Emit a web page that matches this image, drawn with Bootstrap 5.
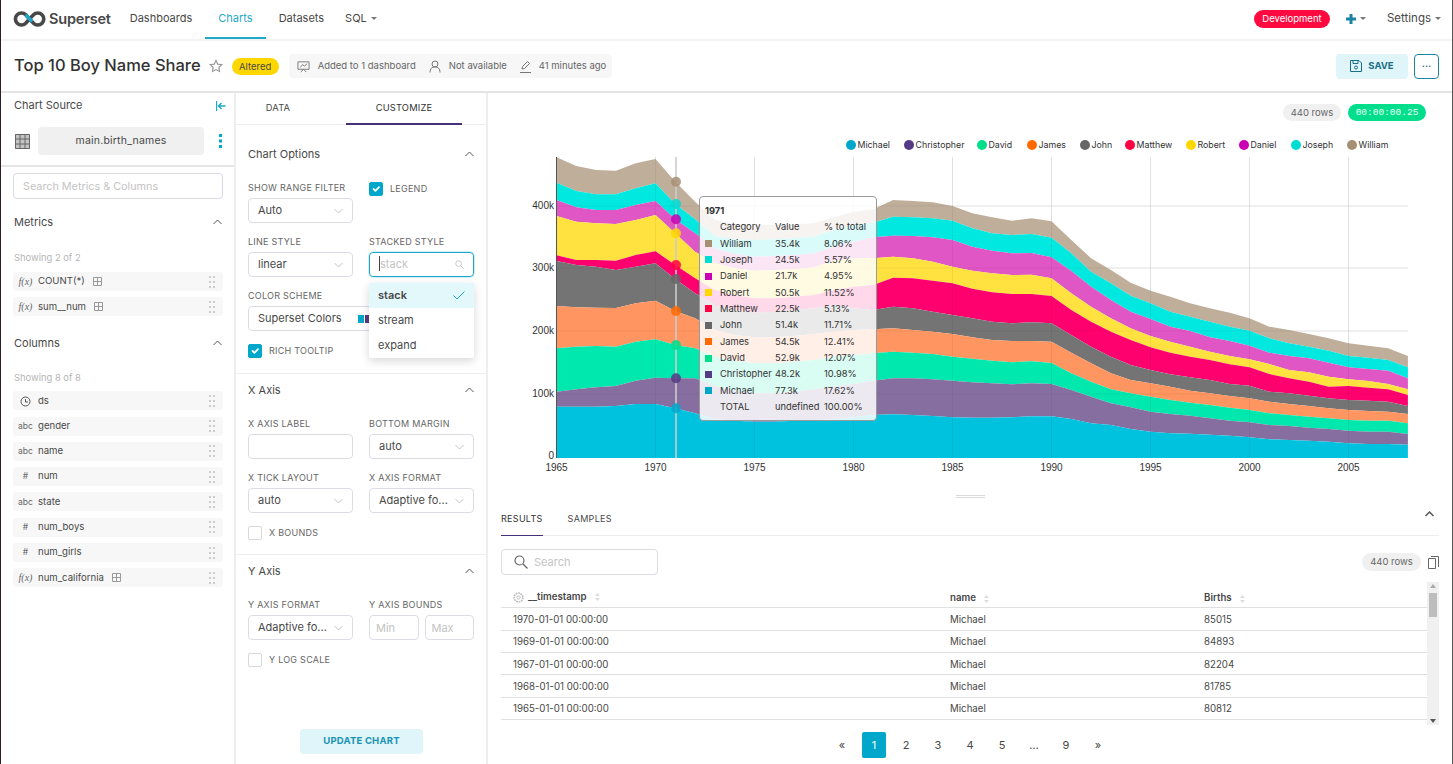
<!DOCTYPE html>
<html lang="en">
<head>
<meta charset="utf-8">
<title>Top 10 Boy Name Share</title>
<link href="https://cdn.jsdelivr.net/npm/bootstrap@5.3.0/dist/css/bootstrap.min.css" rel="stylesheet">
<style>
html,body{height:100%;overflow:hidden}
body{font-family:Inter,"Liberation Sans",sans-serif;color:#323232;background:#fff;font-size:12px}
.app{height:764px;border-left:1px solid #2d1c2a;border-right:1px solid #555;overflow:hidden}
.topnav{height:41px;border-bottom:2px solid #f3f3f3;padding:0 11px 2px 12px;flex:none}
.brand-name{font-size:14.500px;font-weight:600;color:#484848;letter-spacing:-.2px;margin-left:3px}
.topnav .nav-link{color:#484848;font-size:11px;padding:0 13px;height:39px;line-height:37px;border-bottom:2px solid transparent}
.topnav .nav-link.active{color:#1fa8c9;border-bottom-color:#1fa8c9}
.topnav .nav-link.sql-link{margin-left:-5px}
.main-nav{margin-left:6px}
.tri{display:inline-block;width:0;height:0;border:3px solid transparent;border-top:3.500px solid #777;border-bottom:0;vertical-align:2px;margin-left:4px}
.env-pill{background:#ff0a40;color:#fff;font-size:9.500px;border-radius:10px;height:18px;line-height:18px;width:76px;text-align:center}
.settings{font-size:11.500px;color:#484848;margin-left:21px}
.titlebar{height:52px;border-bottom:2px solid #e4e4e4;padding:0 13px;flex:none}
.chart-title{font-size:16.500px;font-weight:500;color:#323232;margin:0}
.altered{background:#ffd700;color:#484848;font-size:9.500px;height:17px;line-height:17px;width:47px;text-align:center;border-radius:9px;font-weight:400;margin-left:9px}
.metabar{background:#f7f7f7;height:24px;width:323px;border-radius:4px;margin-left:10px;padding:0 8px;font-size:9.500px;color:#666;gap:13px}
.metabar span{white-space:nowrap}
.save-btn{background:#dff5f9;color:#1a6f88;border:0;border-radius:4px;width:72px;height:25px;font-size:9.500px;font-weight:700;padding:0;display:flex;align-items:center;justify-content:center;gap:6px}
.more-btn{width:25px;height:25px;border:1px solid #1a85a3;border-radius:4px;margin-left:6px;background:#fff;padding:0;color:#1a6f88;font-size:11px;line-height:16px}
.side{width:235px;flex:none;border-right:2px solid #eee}
.ctrl{width:252px;flex:none;border-right:2px solid #eee;position:relative}
.main-col{min-width:0;flex:1}
.head-txt{font-size:11px;color:#484848;font-weight:400;padding-left:1px}
.src-row{height:74px;border-bottom:2px solid #e4e4e4;padding:0 11px 0 12px}
.src-top{height:25px}
.src-line{margin-top:9px}
.ds-pill{background:#f0f0f0;border-radius:4px;height:28px;width:166px;line-height:28px;text-align:center;font-size:10.500px;color:#484848;letter-spacing:.2px}
.search-box{height:26px;border:1px solid #d9d9e4;border-radius:4px;font-size:10.800px;padding:0 9px;color:#bdbdbd;box-shadow:none}
.search-box::placeholder{color:#c4c4c4}
.group-h{height:20px}
.show-txt{font-size:9.400px;color:#b5b5b5;padding-left:1px}
.field{background:#f7f7f7;height:19px;border-radius:3px;display:flex;align-items:center;font-size:9.600px;color:#484848;padding-right:8px;margin-bottom:6.300px}
.ftype{width:25px;text-align:center;font-size:8.500px;color:#666;flex:none;letter-spacing:0}
.fx{font-family:"Liberation Serif",serif;font-style:italic;font-size:10px}
.ctrl-tabs{height:32px;border-bottom:1px solid #eee}
.ctrl-tabs .nav-link{font-size:9.300px;color:#484848;padding:0;text-transform:uppercase;height:32px;line-height:30px;text-align:center;letter-spacing:.2px;border-bottom:2px solid transparent}
.ctrl-tabs .nav-link.active{border-bottom-color:#443178;color:#323232}
.tab-a{width:110px}.tab-a .nav-link{padding-right:26px}.tab-b{width:116px}
.sect{padding:0 12px 0 12px;border-bottom:1px solid #eee}
.sect-h{height:20px;font-size:11px;color:#484848}
.clabel{font-size:9px;line-height:10px;height:10px;color:#666;letter-spacing:.25px;text-transform:uppercase;margin-bottom:5px;white-space:nowrap}
.crow{display:flex;gap:16px;margin-bottom:14px}
.ccell{width:105px;flex:none;position:relative}
.form-select.sel,.form-control.inp{height:25px;font-size:11px;padding:0 20px 0 9px;border:1px solid #dcdce6;border-radius:4px;color:#484848;line-height:23px;box-shadow:none;background-position:right 9px center;background-size:9px 6px;background-image:url("data:image/svg+xml,%3csvg xmlns='http://www.w3.org/2000/svg' viewBox='0 0 9 6'%3e%3cpath fill='none' stroke='%23c4c4c4' d='M.5 1l4 4 4-4'/%3e%3c/svg%3e");white-space:nowrap;overflow:hidden}
.form-control.plain{background-image:none;padding:0 6px}
.form-control.plain::placeholder{color:#c4c4c4}
.focused{border:1px solid #1fa8c9;border-radius:4px;height:25px;box-shadow:0 0 0 1px #d2eef5;padding:0 9px;color:#c4c4c4;font-size:11px;line-height:23px}
.caret-bar{display:inline-block;width:1px;height:15px;background:#444;vertical-align:-3px}
.opt-menu{position:absolute;top:46px;left:0;width:105px;min-width:0;padding:0;margin:0;border:0;border-radius:2px;box-shadow:0 3px 10px rgba(0,0,0,.16);z-index:5;background:#fff;display:block}
.opt-menu .dropdown-item{height:25px;line-height:25px;padding:0 9px;font-size:11px;color:#484848}
.opt-menu .dropdown-item.picked{background:#e3f8fb;font-weight:600}
.chk{gap:7px;height:14px;font-size:9px;color:#666;letter-spacing:.25px;text-transform:uppercase}
.chk .form-check-input{width:14px;height:14px;margin:0;border-radius:2px;border-color:#d9d9d9;flex:none;box-shadow:none}
.chk .form-check-input:checked{background-color:#00a7ca;border-color:#00a7ca}
.update-btn{background:#dff5f9;color:#1a93b3;border:0;border-radius:4px;width:123px;height:25px;font-size:9.500px;font-weight:700;padding:0;letter-spacing:.2px;position:absolute;left:64px;bottom:10px}
.pills{padding:11px 26px 0 0;height:37px;gap:7px;flex:none}
.rowpill{background:#f0f0f0;border-radius:9px;height:17px;line-height:17px;font-size:9.500px;color:#666;width:58px;text-align:center;font-weight:400}
.timer{background:#00de8c;border-radius:9px;height:17px;line-height:17px;font-size:9.500px;color:#eafff5;width:78px;text-align:center;font-family:"Liberation Mono",monospace;font-weight:400}
.chart-box{position:relative;height:360px;flex:none}
.chart-box svg{display:block}
.tipbox{position:absolute;left:211px;top:66px;width:178px;height:225px;background:rgba(255,255,255,.85);border:1px solid #9a9a9a;border-radius:4px;padding:7px 5px;font-size:9.300px;color:#323232}
.tip-year{font-weight:700;line-height:13px;height:15px}
.tip-tbl{width:167px;table-layout:fixed;border-collapse:collapse}
.tip-tbl td{height:16.360px;padding:0;white-space:nowrap;line-height:16px}
.swatch{display:inline-block;width:7px;height:7px;vertical-align:-0.500px}
.handle{height:15px;flex:none}
.handle i{display:block;width:29px;height:3px;border-top:1px solid #d9d9d9;border-bottom:1px solid #d9d9d9;margin-top:-2px}
.res-wrap{padding:0 13px 0 13px;flex:1;min-height:0}
.res-tabs{height:31px;border-bottom:1px solid #eee;position:relative;flex:none}
.res-tabs .nav-link{font-size:9px;color:#484848;padding:0;height:31px;line-height:28px;letter-spacing:.3px;border-bottom:1px solid transparent;margin-right:25px}
.res-tabs .nav-link.active{border-bottom-color:#443178;color:#323232}
.res-bar{height:26px;margin-top:13px;flex:none}
.res-search{width:157px;height:26px;border:1px solid #dcdce6;border-radius:4px;font-size:11px;color:#c4c4c4;padding-left:12px;gap:6px}
.tbl-wrap{height:143px;margin-top:7px;overflow:hidden;flex:none}
.res-table{table-layout:fixed;font-size:9.700px;color:#484848;margin:0;width:926px}
.res-table th{font-weight:600;height:25px;padding:8px 0 0 12px;vertical-align:middle;border-bottom:1px solid #e0e0e0;color:#484848;box-shadow:none}
.res-table td{height:22.400px;padding:2px 0 0 12px;vertical-align:middle;border-bottom:1px solid #e0e0e0;box-shadow:none}
.fakebar{width:12px;background:#f0f0f0;position:relative;flex:none}
.fakebar b{position:absolute;left:2px;top:11px;width:8px;height:24px;background:#bdbdbd}
.fakebar s{position:absolute;left:3px;width:0;height:0;border:3px solid transparent}
.pg-row{height:30px;flex:none;margin-top:7px}
.pager{margin:0;gap:0}
.pager .page-item .page-link{border:0;width:32px;height:26px;line-height:26px;padding:0;margin:0;text-align:center;font-size:11px;color:#484848;background:none;box-shadow:none}
.pager .page-item.active .page-link{background:#00a7ca;color:#fff;border-radius:2px;width:24px;margin:0 4px}
.bounds-gap{gap:6px}
.collapse-ic{margin-right:-3px}
.side-body{padding:6px 11px 0 12px}
</style>
</head>
<body>
<div class="app d-flex flex-column">
  <header class="topnav d-flex align-items-center">
    <svg width="33" height="16" viewBox="0 0 32 16" class="flex-none"><path fill="none" stroke="#484848" stroke-width="3.600" d="M16 8l-3.800 4.200a6 6 0 1 1 0-8.400L20 12.200a6 6 0 1 0 0-8.400L16 8"/><path fill="none" stroke="#20a7c9" stroke-width="3.600" d="M12.200 3.800L18.500 10.600"/></svg>
    <span class="brand-name">Superset</span>
    <ul class="nav main-nav align-self-start">
      <li class="nav-item"><a class="nav-link" href="#">Dashboards</a></li>
      <li class="nav-item"><a class="nav-link active" href="#">Charts</a></li>
      <li class="nav-item"><a class="nav-link" href="#">Datasets</a></li>
      <li class="nav-item"><a class="nav-link sql-link" href="#">SQL<span class="tri"></span></a></li>
    </ul>
    <div class="ms-auto d-flex align-items-center">
      <span class="env-pill">Development</span>
      <svg class="ms-3" width="10" height="10" viewBox="0 0 10 10"><path d="M3.500 0h3v3.500H10v3H6.500V10h-3V6.500H0v-3h3.500z" fill="#1a85a3"/></svg><span class="tri"></span>
      <span class="settings">Settings<span class="tri"></span></span>
    </div>
  </header>
  <div class="titlebar d-flex align-items-center">
    <h1 class="chart-title">Top 10 Boy Name Share</h1>
    <svg class="ms-2" width="14" height="14" viewBox="0 0 24 24"><path fill="none" stroke="#999" stroke-width="2" d="M12 2.500l3 6.300 6.900.9-5 4.800 1.200 6.900-6.100-3.300-6.100 3.300 1.200-6.900-5-4.800 6.900-.9z"/></svg>
    <span class="altered">Altered</span>
    <div class="metabar d-flex align-items-center">
      <span class="d-flex align-items-center gap-2"><svg width="13" height="13" viewBox="0 0 14 14"><path fill="none" stroke="#777" d="M1 2h12v8H1zM4 13l3-3 3 3M3.500 8l2.500-3 2 1.500L11 4"/></svg>Added to 1 dashboard</span>
      <span class="d-flex align-items-center gap-2"><svg width="12" height="13" viewBox="0 0 12 13"><circle cx="6" cy="4" r="3" fill="none" stroke="#777"/><path fill="none" stroke="#777" d="M1 12.500c0-4 2-5.500 5-5.500s5 1.500 5 5.500"/></svg>Not available</span>
      <span class="d-flex align-items-center gap-2"><svg width="11" height="13" viewBox="0 0 11 13"><path fill="none" stroke="#777" d="M2 9l.5-2.500L7.500 1.500l2 2-5 5zM0 12.500h11"/></svg>41 minutes ago</span>
    </div>
    <div class="ms-auto d-flex align-items-center">
      <button class="save-btn" type="button"><svg width="12" height="12" viewBox="0 0 12 12"><path fill="none" stroke="#1a6f88" d="M.5.500h8.500l2.500 2.500v8.500H.5zM3 .500v3h5v-3"/><circle cx="6" cy="7.500" r="1.500" fill="none" stroke="#1a6f88"/></svg>SAVE</button>
      <button class="more-btn" type="button">···</button>
    </div>
  </div>
  <div class="d-flex flex-grow-1" style="min-height:0">
    <aside class="side">
      <div class="src-row">
        <div class="src-top d-flex align-items-center justify-content-between"><span class="head-txt">Chart Source</span>
          <svg width="10" height="10" viewBox="0 0 10 10" class="collapse-ic"><path d="M.5 0v10M9.500 5H2.500M5.500 2l-3 3 3 3" fill="none" stroke="#1fa8c9" stroke-width="1.400"/></svg></div>
        <div class="d-flex align-items-center src-line">
          <svg width="15" height="15" viewBox="0 0 15 15" style="margin:0 8px 0 2px"><path fill="#c4c4c4" d="M0 0h15v15H0z"/><path stroke="#666" fill="none" d="M.5.500h14v14H.5zM5 0v15M10 0v15M0 5h15M0 10h15"/></svg>
          <div class="ds-pill">main.birth_names</div>
          <svg width="3" height="14" viewBox="0 0 3 14" style="margin-left:15px"><g fill="#00a7ca"><rect width="3" height="3"/><rect y="5.500" width="3" height="3"/><rect y="11" width="3" height="3"/></g></svg>
        </div>
      </div>
      <div class="side-body">
        <input class="form-control search-box" placeholder="Search Metrics &amp; Columns">
        <div class="group-h d-flex align-items-center justify-content-between" style="margin-top:13px"><span class="head-txt">Metrics</span><svg width="9" height="6" viewBox="0 0 9 6" style="margin-right:1px"><path fill="none" stroke="#555" d="M.5 5l4-4 4 4"/></svg></div>
        <div class="show-txt" style="margin-top:19px;margin-bottom:7px;line-height:14px">Showing 2 of 2</div>
        <div id="metrics"></div>
        <div class="group-h d-flex align-items-center justify-content-between" style="margin-top:17px"><span class="head-txt">Columns</span><svg width="9" height="6" viewBox="0 0 9 6" style="margin-right:1px"><path fill="none" stroke="#555" d="M.5 5l4-4 4 4"/></svg></div>
        <div class="show-txt" style="margin-top:18px;margin-bottom:6px;line-height:14px">Showing 8 of 8</div>
        <div id="columns"></div>
      </div>
    </aside>
    <section class="ctrl">
      <ul class="nav ctrl-tabs">
        <li class="nav-item tab-a"><a class="nav-link" href="#">Data</a></li>
        <li class="nav-item tab-b"><a class="nav-link active" href="#">Customize</a></li>
      </ul>
      <div class="sect" style="padding-top:19px;padding-bottom:15px">
        <div class="sect-h d-flex align-items-center justify-content-between"><span>Chart Options</span><svg width="9" height="6" viewBox="0 0 9 6"><path fill="none" stroke="#555" d="M.5 5l4-4 4 4"/></svg></div>
        <div class="crow" style="margin-top:19px">
          <div class="ccell"><div class="clabel">Show range filter</div><select class="form-select sel"><option>Auto</option></select></div>
          <div class="ccell"><label class="chk d-flex align-items-center" style="margin-top:-1px"><input class="form-check-input" type="checkbox" checked>Legend</label></div>
        </div>
        <div class="crow">
          <div class="ccell"><div class="clabel">Line style</div><select class="form-select sel"><option>linear</option></select></div>
          <div class="ccell"><div class="clabel">Stacked style</div>
            <div class="focused d-flex align-items-center justify-content-between"><span><span class="caret-bar"></span>stack</span><svg width="9" height="9" viewBox="0 0 10 10"><circle cx="4" cy="4" r="3.200" fill="none" stroke="#c4c4c4"/><path stroke="#c4c4c4" d="M6.500 6.500l3 3"/></svg></div>
            <div class="dropdown-menu opt-menu">
              <a class="dropdown-item picked d-flex align-items-center justify-content-between" href="#">stack<svg width="12" height="9" viewBox="0 0 12 9"><path fill="none" stroke="#1fa8c9" d="M.5 4.500l3.500 3.500 7.500-7.500"/></svg></a>
              <a class="dropdown-item" href="#">stream</a>
              <a class="dropdown-item" href="#">expand</a>
            </div>
          </div>
        </div>
        <div class="clabel">Color scheme</div>
        <div class="form-select sel d-flex align-items-center" style="width:226px;margin-bottom:13px"><span>Superset Colors</span><svg width="30" height="8" viewBox="0 0 30 8" style="margin-left:16px"><rect width="6" height="8" fill="#00a7ca"/><rect x="7" width="6" height="8" fill="#553a85"/></svg></div>
        <label class="chk d-flex align-items-center"><input class="form-check-input" type="checkbox" checked>Rich tooltip</label>
      </div>
      <div class="sect" style="padding-top:6px;padding-bottom:14px">
        <div class="sect-h d-flex align-items-center justify-content-between"><span>X Axis</span><svg width="9" height="6" viewBox="0 0 9 6"><path fill="none" stroke="#555" d="M.5 5l4-4 4 4"/></svg></div>
        <div class="crow" style="margin-top:19px">
          <div class="ccell"><div class="clabel">X axis label</div><input class="form-control inp plain" aria-label="X axis label"></div>
          <div class="ccell"><div class="clabel">Bottom margin</div><select class="form-select sel"><option>auto</option></select></div>
        </div>
        <div class="crow" style="margin-bottom:13px">
          <div class="ccell"><div class="clabel">X tick layout</div><select class="form-select sel"><option>auto</option></select></div>
          <div class="ccell"><div class="clabel">X axis format</div><select class="form-select sel"><option>Adaptive fo...</option></select></div>
        </div>
        <label class="chk d-flex align-items-center"><input class="form-check-input" type="checkbox">X bounds</label>
      </div>
      <div class="sect border-0" style="padding-top:6px">
        <div class="sect-h d-flex align-items-center justify-content-between"><span>Y Axis</span><svg width="9" height="6" viewBox="0 0 9 6"><path fill="none" stroke="#555" d="M.5 5l4-4 4 4"/></svg></div>
        <div class="crow" style="margin-top:19px;margin-bottom:13px">
          <div class="ccell"><div class="clabel">Y axis format</div><select class="form-select sel"><option>Adaptive fo...</option></select></div>
          <div class="ccell"><div class="clabel">Y axis bounds</div><div class="d-flex bounds-gap"><input class="form-control inp plain" placeholder="Min"><input class="form-control inp plain" placeholder="Max"></div></div>
        </div>
        <label class="chk d-flex align-items-center"><input class="form-check-input" type="checkbox">Y log scale</label>
      </div>
      <button class="update-btn" type="button">UPDATE CHART</button>
    </section>
    <main class="main-col d-flex flex-column">
      <div class="pills d-flex justify-content-end align-items-start">
        <span class="rowpill">440 rows</span><span class="timer">00:00:00.25</span>
      </div>
      <div class="chart-box">
        <svg id="chart" width="964" height="360" viewBox="488 130 964 360" xmlns="http://www.w3.org/2000/svg"></svg>
        <div class="tipbox">
          <div class="tip-year">1971</div>
          <table class="tip-tbl"><colgroup><col style="width:15px"><col style="width:55px"><col style="width:49px"><col></colgroup><tbody id="tipbody"></tbody></table>
        </div>
      </div>
      <div class="handle d-flex align-items-center justify-content-center"><i></i></div>
      <div class="res-wrap d-flex flex-column">
        <div class="res-tabs d-flex">
          <ul class="nav">
            <li class="nav-item"><a class="nav-link active" href="#">RESULTS</a></li>
            <li class="nav-item"><a class="nav-link" href="#">SAMPLES</a></li>
          </ul>
          <svg class="ms-auto" width="9" height="6" viewBox="0 0 9 6" style="margin:6px 5px 0 0"><path fill="none" stroke="#555" stroke-width="1.500" d="M.5 5l4-4 4 4"/></svg>
        </div>
        <div class="res-bar d-flex align-items-center">
          <div class="res-search d-flex align-items-center"><svg width="14" height="14" viewBox="0 0 14 14"><circle cx="5.500" cy="5.500" r="4.500" fill="none" stroke="#666" stroke-width="1.200"/><path stroke="#666" stroke-width="1.200" d="M9 9l4.500 4.500"/></svg>Search</div>
          <span class="rowpill ms-auto" style="height:18px;line-height:18px;width:59px;margin-right:7px">440 rows</span>
          <svg width="11" height="13" viewBox="0 0 11 13"><path fill="none" stroke="#666" d="M.5 2.500h7v10h-7z"/><path fill="none" stroke="#666" d="M3 .5h7.500V11"/></svg>
        </div>
        <div class="tbl-wrap d-flex">
          <div class="flex-grow-1" style="min-width:0">
            <table class="table res-table">
              <colgroup><col style="width:437px"><col style="width:254px"><col></colgroup>
              <thead><tr>
                <th><span class="d-inline-flex align-items-center gap-1"><svg width="11" height="11" viewBox="0 0 12 12"><circle cx="6" cy="6" r="4.800" fill="none" stroke="#bbb" stroke-dasharray="2 .7" stroke-width="1.600"/><circle cx="6" cy="6" r="1.800" fill="none" stroke="#bbb"/></svg>__timestamp<svg class="ms-1" width="5" height="8" viewBox="0 0 5 8"><path fill="#ddd" d="M2.500 0L5 3H0zM2.500 8L0 5h5z"/></svg></span></th>
                <th><span class="d-inline-flex align-items-center gap-1">name<svg class="ms-1" width="5" height="8" viewBox="0 0 5 8"><path fill="#ddd" d="M2.500 0L5 3H0zM2.500 8L0 5h5z"/></svg></span></th>
                <th><span class="d-inline-flex align-items-center gap-1">Births<svg class="ms-1" width="5" height="8" viewBox="0 0 5 8"><path fill="#ddd" d="M2.500 0L5 3H0zM2.500 8L0 5h5z"/></svg></span></th>
              </tr></thead>
              <tbody>
                <tr><td>1970-01-01 00:00:00</td><td>Michael</td><td>85015</td></tr>
                <tr><td>1969-01-01 00:00:00</td><td>Michael</td><td>84893</td></tr>
                <tr><td>1967-01-01 00:00:00</td><td>Michael</td><td>82204</td></tr>
                <tr><td>1968-01-01 00:00:00</td><td>Michael</td><td>81785</td></tr>
                <tr><td>1965-01-01 00:00:00</td><td>Michael</td><td>80812</td></tr>
              </tbody>
            </table>
          </div>
          <div class="fakebar"><s style="top:2px;border-top:0;border-bottom:4px solid #aaa"></s><b></b><s style="bottom:2px;border-bottom:0;border-top:4px solid #555"></s></div>
        </div>
        <div class="pg-row d-flex justify-content-center">
          <ul class="pagination pager">
            <li class="page-item"><a class="page-link" href="#">«</a></li>
            <li class="page-item active"><a class="page-link" href="#">1</a></li>
            <li class="page-item"><a class="page-link" href="#">2</a></li>
            <li class="page-item"><a class="page-link" href="#">3</a></li>
            <li class="page-item"><a class="page-link" href="#">4</a></li>
            <li class="page-item"><a class="page-link" href="#">5</a></li>
            <li class="page-item"><a class="page-link" href="#">…</a></li>
            <li class="page-item"><a class="page-link" href="#">9</a></li>
            <li class="page-item"><a class="page-link" href="#">»</a></li>
          </ul>
        </div>
      </div>
    </main>
  </div>
</div>
<script>
(function(){
var grip='<svg class="ms-auto" width="6" height="12" viewBox="0 0 6 12"><g fill="#ccc"><rect width="2" height="2"/><rect x="4" width="2" height="2"/><rect y="5" width="2" height="2"/><rect x="4" y="5" width="2" height="2"/><rect y="10" width="2" height="2"/><rect x="4" y="10" width="2" height="2"/></g></svg>';
var calc='<svg class="ms-2" width="9" height="9" viewBox="0 0 9 9"><path fill="none" stroke="#999" d="M.5.500h8v8h-8zM.5 4.500h8M4.500.500v8"/></svg>';
var clock='<svg width="11" height="11" viewBox="0 0 11 11"><circle cx="5.500" cy="5.500" r="4.500" fill="none" stroke="#555"/><path fill="none" stroke="#555" d="M5.500 3v3H8"/></svg>';
function item(t,n,c){return '<div class="field"><span class="ftype'+(t==='f(x)'?' fx':'')+'">'+t+'</span><span>'+n+'</span>'+(c?calc:'')+grip+'</div>';}
document.getElementById('metrics').innerHTML=item('f(x)','COUNT(*)',1)+item('f(x)','sum__num',1);
document.getElementById('columns').innerHTML=item(clock,'ds')+item('abc','gender')+item('abc','name')+item('#','num')+item('abc','state')+item('#','num_boys')+item('#','num_girls')+item('f(x)','num_california',1);

var names=['William','Joseph','Daniel','Robert','Matthew','John','James','David','Christopher','Michael'];
var solid=['#a78f74','#00dcd2','#c900b3','#ffd700','#ff0042','#666666','#ff6a00','#00de8c','#553a85','#00a7ca'];
var area=['#bfae9a','#00e8e0','#e056c4','#ffe240','#ff006f','#747474','#ff9560','#00e8ae','#866fa0','#00c1de'];
var d=[
[82,158,210,258,376,393,528,655,785,830],[108,183,232,275,390,405,532,650,778,830],[120,193,240,280,390,410,533,648,772,830],[122,193,240,282,392,420,534,650,768,828],[100,175,225,270,375,410,520,635,752,822],[87,160,213,255,364,400,512,628,743,822],
[155,222,268,310,405,447,543,645,745,835],[215,268,310,365,445,490,565,655,745,850],[270,318,355,400,480,525,600,680,768,868],[283,328,372,415,495,540,615,692,782,872],[285,330,380,422,505,548,622,700,790,875],[285,328,378,420,505,545,622,700,790,875],[283,325,375,418,500,540,618,695,785,872],[280,320,370,412,495,535,612,690,778,870],[262,300,350,392,480,525,605,680,770,868],[245,285,335,385,470,535,600,675,762,862],[238,278,322,385,465,540,598,670,752,855],
[210,260,317,380,443,530,595,665,745,853],[213,262,318,385,445,535,600,668,745,855],[217,265,322,395,452,545,605,672,748,858],[228,272,330,410,460,555,612,680,752,862],[250,295,350,422,476,565,622,686,757,863],[262,310,362,430,487,575,630,692,760,863],[272,315,370,435,492,580,633,697,763,862],[265,312,369,434,492,577,633,694,760,859],[274,323,382,445,498,580,635,699,762,859],
[330,370,423,490,540,615,668,730,780,867],[385,425,470,530,575,650,700,755,800,880],[420,460,510,565,605,680,730,778,820,885],[458,497,545,595,630,705,750,790,832,897],[482,520,567,618,652,720,760,800,845,905],[500,545,590,635,668,733,770,810,852,910],[520,560,603,650,680,742,782,818,857,911],[535,575,622,665,690,750,790,825,865,914],[548,590,633,678,703,762,798,833,872,917],[565,602,647,688,712,767,805,840,877,922],[590,625,668,702,732,785,815,850,885,928],[600,640,678,720,745,790,822,855,888,930],[612,650,685,727,755,797,828,860,893,932],[625,662,698,740,770,805,835,865,897,935],[640,678,712,748,768,810,840,870,902,940],[647,683,717,753,773,812,843,872,905,942],[655,690,722,762,778,815,845,872,905,942],[678,712,745,778,795,828,852,880,912,944]];
function X(i){return (556.5+19.8*i).toFixed(1);}
function Y(v){return (130+v/3).toFixed(1);}
var s='';
var yt=[[0,458],[100,394],[200,331],[300,268],[400,206]];
var gx=[];for(var yr=1970;yr<=2005;yr+=5)gx.push(556.5+19.8*(yr-1965));
gx.forEach(function(x){s+='<line x1="'+x+'" x2="'+x+'" y1="157" y2="458" stroke="#ececec"/>';});
yt.slice(1).forEach(function(t){s+='<line x1="556" x2="1408" y1="'+t[1]+'" y2="'+t[1]+'" stroke="#ececec"/>';});
for(var k=0;k<10;k++){
  var p='M';
  for(var i=0;i<d.length;i++)p+=(i?'L':'')+X(i)+' '+Y(d[i][k]);
  for(var j=d.length-1;j>=0;j--)p+='L'+X(j)+' '+(k<9?Y(d[j][k+1]):'458');
  s+='<path d="'+p+'Z" fill="'+area[k]+'"/>';
}
gx.forEach(function(x){s+='<line x1="'+x+'" x2="'+x+'" y1="157" y2="458" stroke="#000" stroke-opacity=".05"/>';});
yt.slice(1).forEach(function(t){s+='<line x1="556" x2="1408" y1="'+t[1]+'" y2="'+t[1]+'" stroke="#000" stroke-opacity=".05"/>';});
s+='<line x1="556.500" x2="556.500" y1="157" y2="458" stroke="#555"/>';
var tf='font-family="Liberation Sans,sans-serif" fill="#323232"';
yt.forEach(function(t){s+='<text x="554" y="'+(t[0]?t[1]+3:459)+'" text-anchor="end" font-size="10" '+tf+'>'+(t[0]?t[0]+'k':'0')+'</text>';});
for(var y2=1965;y2<=2005;y2+=5)s+='<text x="'+X(y2-1965)+'" y="471" text-anchor="middle" font-size="10" '+tf+'>'+y2+'</text>';
s+='<line x1="676" x2="676" y1="157" y2="458" stroke="#ccc" stroke-opacity=".8" stroke-width="2"/>';
[155,222,268,310,405,447,543,645,745,835].forEach(function(v,n){s+='<circle cx="676" cy="'+Y(v)+'" r="5" fill="'+solid[n]+'" fill-opacity=".85"/>';});
var lg=[[9,851],[8,909],[7,982],[6,1032],[5,1085],[4,1130],[3,1191],[2,1244],[1,1296],[0,1352]];
lg.forEach(function(l){s+='<circle cx="'+l[1]+'" cy="145" r="5" fill="'+solid[l[0]]+'"/><text x="'+(l[1]+6.500)+'" y="148" font-size="8.800" font-family="Inter,sans-serif" fill="#323232">'+names[l[0]]+'</text>';});
document.getElementById('chart').innerHTML=s;

var vals=[['35.4k','8.06%'],['24.5k','5.57%'],['21.7k','4.95%'],['50.5k','11.52%'],['22.5k','5.13%'],['51.4k','11.71%'],['54.5k','12.41%'],['52.9k','12.07%'],['48.2k','10.98%'],['77.3k','17.62%']];
var r='<tr><td></td><td>Category</td><td>Value</td><td>% to total</td></tr>';
names.forEach(function(n,i){r+='<tr><td><span class="swatch" style="background:'+solid[i]+'"></span></td><td>'+n+'</td><td>'+vals[i][0]+'</td><td>'+vals[i][1]+'</td></tr>';});
r+='<tr><td></td><td>TOTAL</td><td>undefined</td><td>100.00%</td></tr>';
document.getElementById('tipbody').innerHTML=r;
})();
</script>
</body>
</html>
